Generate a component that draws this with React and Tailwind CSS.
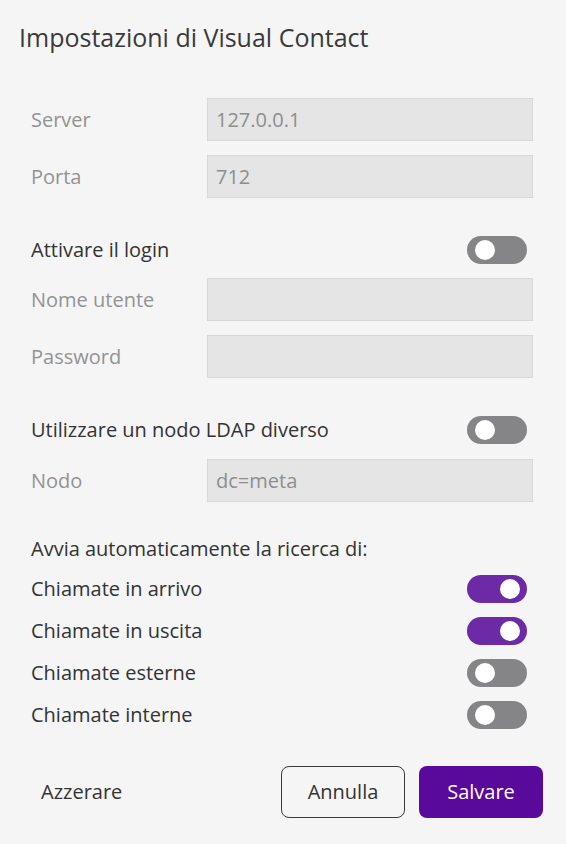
import React from "react";

function Toggle({ on }) {
  return (
    <div
      className={
        "relative h-[28px] w-[60px] shrink-0 rounded-full " +
        (on ? "bg-[#6c2aa6]" : "bg-[#858487]")
      }
    >
      <div
        className={
          "absolute top-[4px] h-[20px] w-[20px] rounded-full bg-white " +
          (on ? "left-[33px]" : "left-[8px]")
        }
      />
    </div>
  );
}

function InputRow({ label, value, className = "" }) {
  return (
    <div className={"flex items-center " + className}>
      <div className="w-[176px] shrink-0 text-[20px] text-[#939393]">{label}</div>
      <div className="flex h-[43px] flex-1 items-center border border-[#d8d8d8] bg-[#e5e5e5] px-[8px] text-[20px] text-[#8e8e8e]">
        {value}
      </div>
    </div>
  );
}

function ToggleRow({ label, on, className = "" }) {
  return (
    <div className={"flex h-[28px] items-center justify-between " + className}>
      <div className="text-[20px] text-[#333333]">{label}</div>
      <div className="mr-[6px]">
        <Toggle on={on} />
      </div>
    </div>
  );
}

export default function App() {
  return (
    <div className="min-h-[844px] bg-[#f5f5f5] font-['Open_Sans',sans-serif] leading-[24px]">
      <h1 className="pl-[19px] pt-[21px] text-[25px] font-normal leading-[32px] text-[#3a3a3a]">
        Impostazioni di Visual Contact
      </h1>
      <div className="pl-[31px] pr-[33px]">
        <InputRow label="Server" value="127.0.0.1" className="mt-[45px]" />
        <InputRow label="Porta" value="712" className="mt-[14px]" />
        <ToggleRow label="Attivare il login" on={false} className="mt-[38px]" />
        <InputRow label="Nome utente" value="" className="mt-[14px]" />
        <InputRow label="Password" value="" className="mt-[14px]" />
        <ToggleRow label="Utilizzare un nodo LDAP diverso" on={false} className="mt-[38px]" />
        <InputRow label="Nodo" value="dc=meta" className="mt-[15px]" />
        <div className="mt-[35px] text-[20px] text-[#333333]">Avvia automaticamente la ricerca di:</div>
        <ToggleRow label="Chiamate in arrivo" on={true} className="mt-[14px]" />
        <ToggleRow label="Chiamate in uscita" on={true} className="mt-[14px]" />
        <ToggleRow label="Chiamate esterne" on={false} className="mt-[14px]" />
        <ToggleRow label="Chiamate interne" on={false} className="mt-[14px]" />
      </div>
      <div className="mt-[37px] flex items-center pl-[23px] pr-[23px]">
        <button className="h-[52px] px-[18px] text-[20px] text-[#333333]">Azzerare</button>
        <div className="ml-auto flex gap-[14px]">
          <button className="h-[52px] w-[124px] rounded-[8px] border border-[#3a3a3a] text-[20px] text-[#333333]">
            Annulla
          </button>
          <button className="h-[52px] w-[124px] rounded-[8px] bg-[#5a0a9a] text-[20px] text-white">
            Salvare
          </button>
        </div>
      </div>
    </div>
  );
}
